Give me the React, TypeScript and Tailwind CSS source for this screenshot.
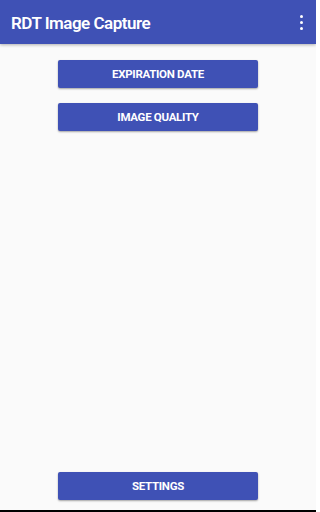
import React from "react";

function Btn({ label }: { label: string }) {
  return (
    <div className="w-[200px] h-[28px] bg-[#3f51b5] rounded-[2px] shadow-[0_1px_2px_rgba(0,0,0,0.35)] flex items-center justify-center pt-[2px] text-white text-[11.5px] font-bold tracking-[-0.3px]">
      {label}
    </div>
  );
}

export default function App() {
  return (
    <div
      className="w-[316px] h-[512px] bg-[#fafafa] flex flex-col overflow-hidden"
      style={{ fontFamily: "Roboto, 'Liberation Sans', sans-serif" }}
    >
      <div className="h-[44px] shrink-0 bg-[#3f51b5] flex items-center justify-between pl-[11px] pr-[13px] shadow-[0_1px_3px_rgba(0,0,0,0.3)] relative z-10">
        <span className="text-white text-[17px] font-semibold leading-none tracking-[-0.5px] pt-[3px]">RDT Image Capture</span>
        <div className="flex flex-col items-center gap-[2.5px] pt-[1px]">
          <span className="w-[3.5px] h-[3.5px] rounded-full bg-white" />
          <span className="w-[3.5px] h-[3.5px] rounded-full bg-white" />
          <span className="w-[3.5px] h-[3.5px] rounded-full bg-white" />
        </div>
      </div>
      <div className="flex-1 flex flex-col items-center pt-[16px]">
        <Btn label="EXPIRATION DATE" />
        <div className="h-[15px]" />
        <Btn label="IMAGE QUALITY" />
        <div className="flex-1" />
        <Btn label="SETTINGS" />
        <div className="h-[10px]" />
      </div>
      <div className="h-[2px] bg-black shrink-0" />
    </div>
  );
}
